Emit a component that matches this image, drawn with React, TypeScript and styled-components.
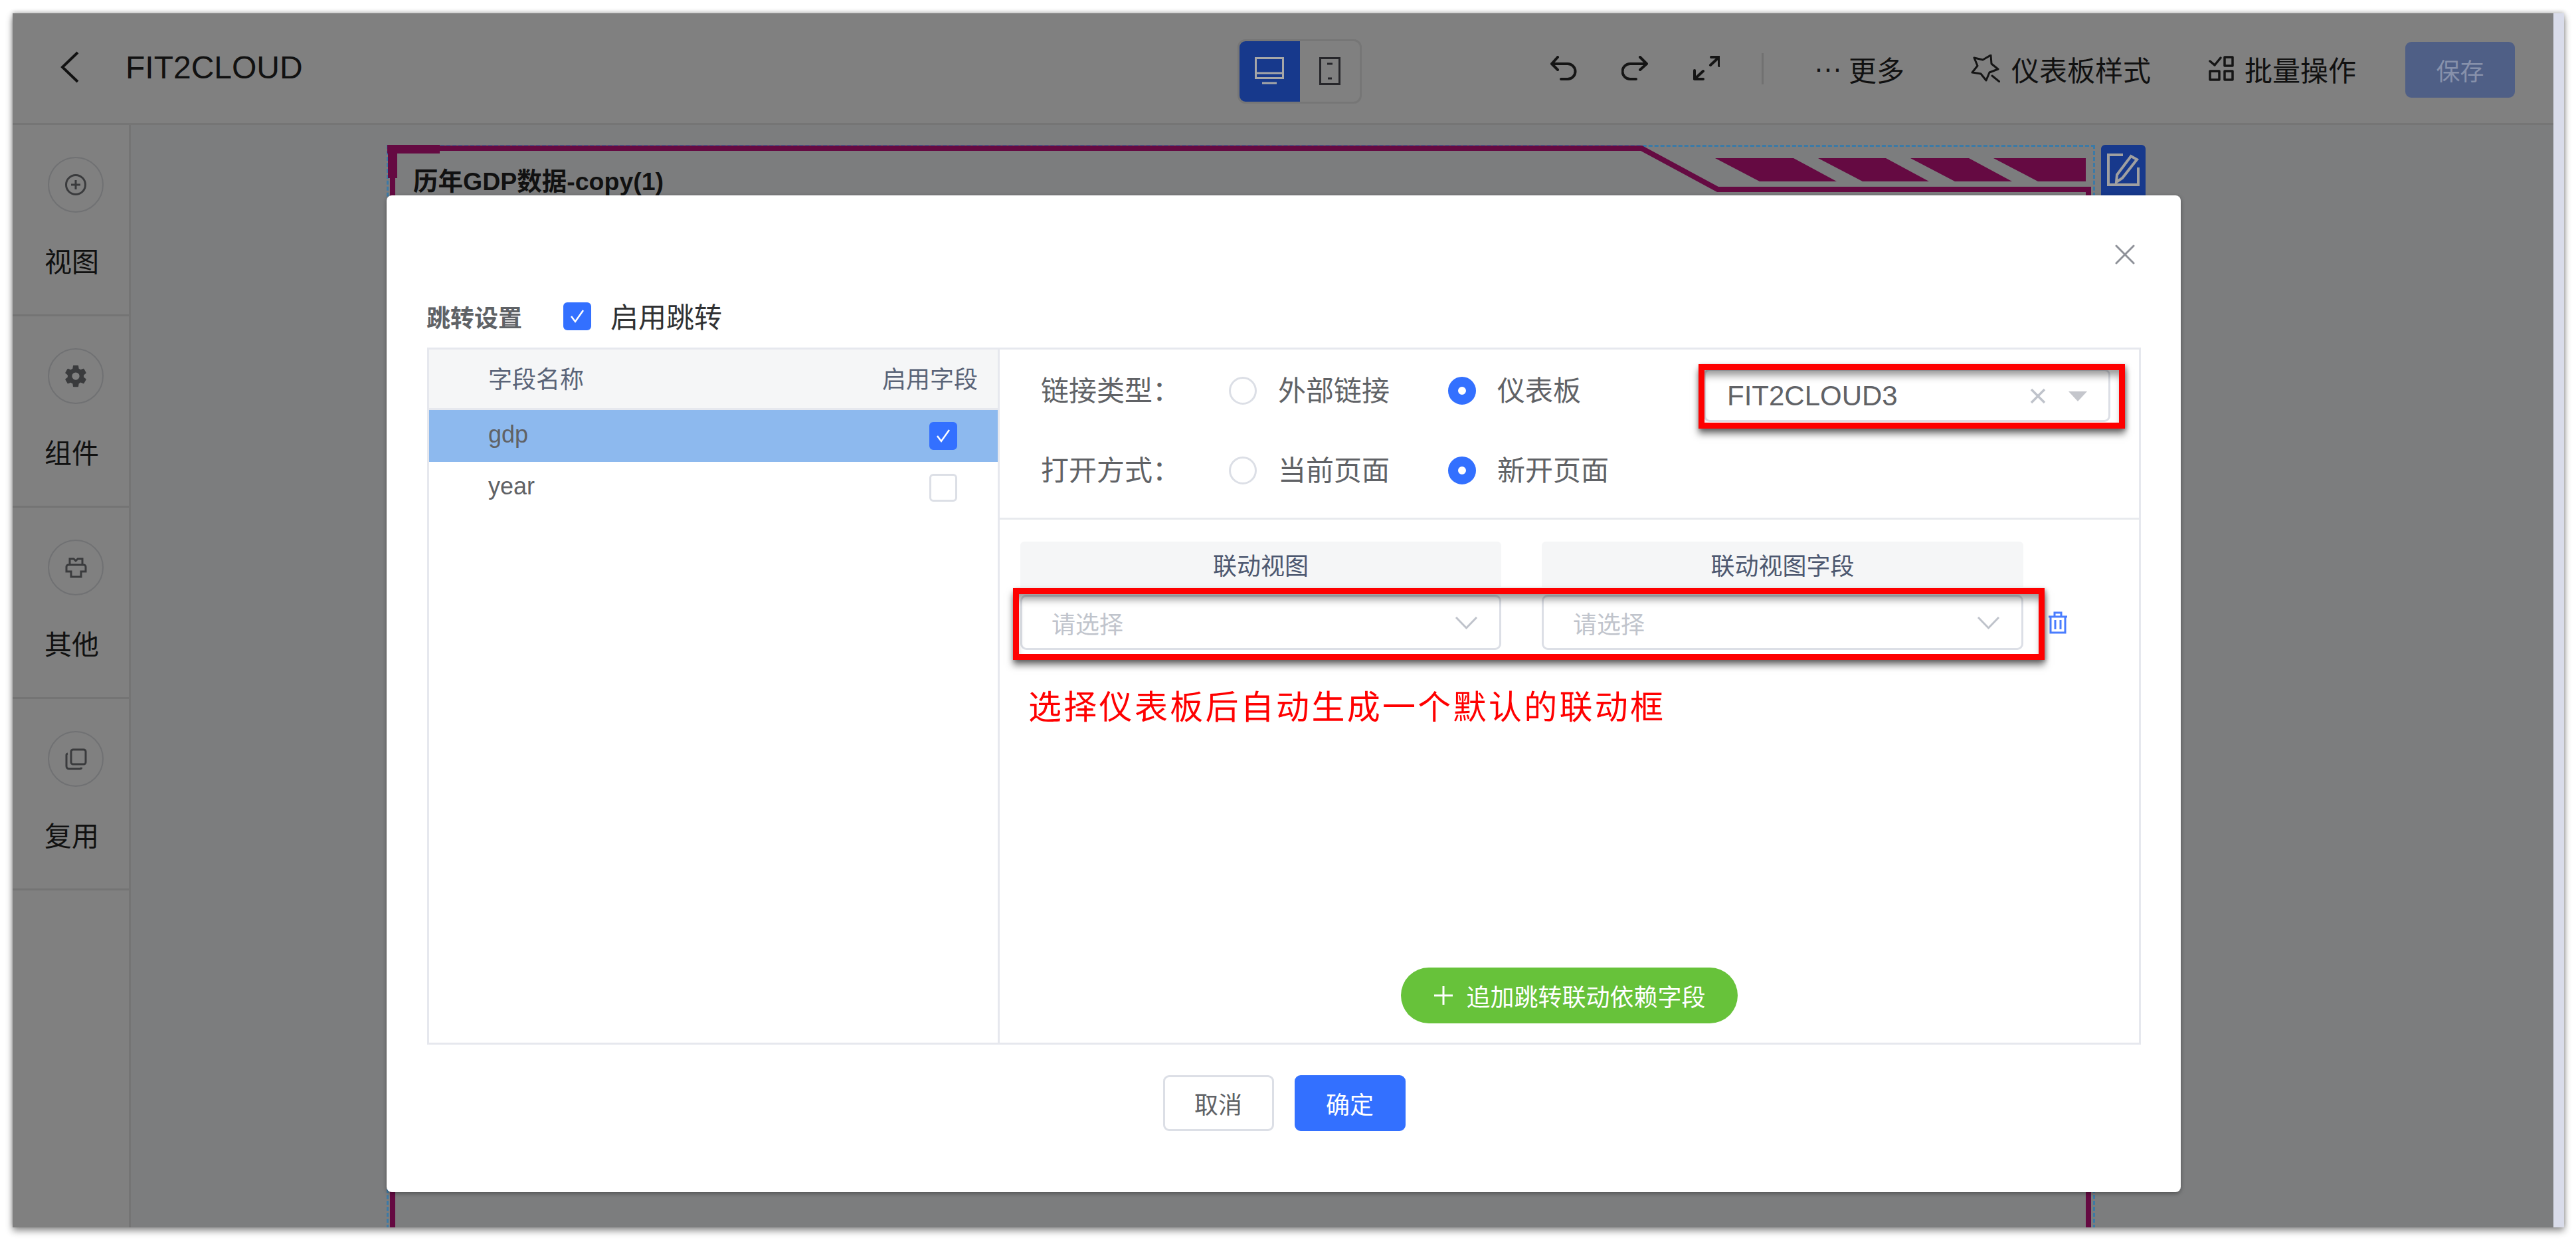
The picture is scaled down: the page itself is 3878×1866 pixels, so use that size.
import React from 'react';
import styled, { createGlobalStyle } from 'styled-components';
import { IoSettingsSharp } from 'react-icons/io5';

const FONT = '"Liberation Sans", "Noto Sans CJK SC", sans-serif';
const BLUE = '#3370ff';

const GlobalStyle = createGlobalStyle`
  html, body {
    margin: 0;
    padding: 0;
    background: #fff;
    font-family: ${FONT};
  }
  * {
    box-sizing: border-box;
  }
`;

const Page = styled.div`
  width: 3878px;
  height: 1866px;
  padding: 20px 18px 19px 19px;
  overflow: hidden;
`;

const Window = styled.div`
  display: flex;
  height: 1827px;
  box-shadow: 0 5px 10px rgba(0, 0, 0, 0.45), 0 -2px 6px rgba(0, 0, 0, 0.2);
`;

const Main = styled.div`
  position: relative;
  flex: 0 0 3825px;
  display: flex;
  flex-direction: column;
  overflow: hidden;
`;

const ScrollStrip = styled.div`
  flex: 0 0 16px;
  background: #d9dcea;
`;

/* top bar */
const Header = styled.header`
  flex: 0 0 168px;
  display: flex;
  align-items: center;
  background: #808080;
  border-bottom: 3px solid #757575;
  padding: 9px 58px 0 0;
`;

const HeaderLeft = styled.div`
  flex: 0 0 1844px;
  display: flex;
  align-items: center;
  margin-top: -12px;
  padding-left: 72px;
  gap: 70px;
`;

const Title = styled.div`
  font-size: 48px;
  color: #111;
`;

const DeviceSwitch = styled.div`
  display: flex;
  width: 187px;
  height: 97px;
  border: 3px solid #767676;
  border-radius: 12px;
  overflow: hidden;
`;

const DeviceBtn = styled.div<{ $active?: boolean }>`
  flex: 1;
  display: flex;
  align-items: center;
  justify-content: center;
  background: ${p => (p.$active ? '#17398c' : 'transparent')};
`;

const Tools = styled.div`
  margin: -8px 0 0 auto;
  display: flex;
  align-items: center;
  color: #111;
  font-size: 42px;
`;

const ToolIcon = styled.svg<{ $gap: number }>`
  display: block;
  margin-right: ${p => p.$gap}px;
  fill: none;
  stroke: #151515;
  stroke-width: 4;
  stroke-linecap: round;
  stroke-linejoin: round;
`;

const ToolDivider = styled.div`
  width: 3px;
  height: 47px;
  background: #717171;
  margin-right: 76px;
`;

const ToolText = styled.span<{ $gap: number }>`
  margin-right: ${p => p.$gap}px;
  white-space: nowrap;
`;

const SaveBtn = styled.div`
  width: 165px;
  height: 84px;
  margin-top: 4px;
  border-radius: 9px;
  background: #4f5f86;
  color: #8791ab;
  font-size: 36px;
  display: flex;
  align-items: center;
  justify-content: center;
`;

/* left rail + canvas */
const Workspace = styled.div`
  flex: 1;
  display: flex;
  min-height: 0;
`;

const Rail = styled.aside`
  flex: 0 0 178px;
  background: #808080;
  border-right: 3px solid #747474;
`;

const RailSection = styled.div`
  height: 288px;
  border-bottom: 3px solid #747474;
  padding: 48px 0 0 53px;
`;

const RailCircle = styled.div`
  width: 84px;
  height: 84px;
  border: 2px solid #707173;
  border-radius: 50%;
  display: flex;
  align-items: center;
  justify-content: center;
  color: #3a3b3d;
`;

const RailLabel = styled.div`
  margin: 50px 0 0 -5px;
  font-size: 41px;
  line-height: 50px;
  color: #111;
`;

const RailSvg = styled.svg`
  display: block;
  fill: none;
  stroke: currentColor;
  stroke-width: 3;
`;

const Canvas = styled.div`
  position: relative;
  flex: 1;
  background: #7c7d7e;
`;

const ChartItem = styled.div`
  position: absolute;
  left: 385px;
  top: 30px;
  width: 2572px;
  height: 1640px;
  border: 3px dashed #3c7aa6;
  border-bottom: 0;
  padding: 32px 37px;
`;

const ChartFrame = styled.svg`
  position: absolute;
  left: -3px;
  top: -3px;
`;

const ChartTitle = styled.div`
  position: relative;
  font-size: 37.5px;
  line-height: 40px;
  font-weight: 700;
  color: #111;
`;

const EditBtn = styled.div`
  position: absolute;
  left: 2578px;
  top: -3px;
  width: 67px;
  height: 100px;
  background: #17398c;
  border-radius: 6px 6px 0 0;
  padding: 12px 0 0 7px;
`;

/* dialog */
const Dialog = styled.div`
  position: absolute;
  left: 563px;
  top: 274px;
  width: 2701px;
  height: 1500px;
  background: #fff;
  border-radius: 8px;
  box-shadow: 0 2px 6px rgba(0, 0, 0, 0.35);
  padding: 161px 60px 0 61px;
  display: flex;
  flex-direction: column;
`;

const CloseIcon = styled.svg`
  position: absolute;
  left: 2602px;
  top: 74px;
  stroke: #8f9299;
  stroke-width: 3;
  stroke-linecap: round;
`;

const SettingBar = styled.div`
  display: flex;
  align-items: center;
  height: 42px;
  margin-bottom: 26px;
`;

const SettingTitle = styled.div`
  font-size: 36px;
  font-weight: 700;
  color: #5f6266;
  margin: 0 62px 0 -1px;
`;

const CheckLabel = styled.div`
  font-size: 42px;
  color: #303133;
  margin: -4px 0 0 29px;
`;

const Box = styled.div<{ $checked?: boolean }>`
  flex: 0 0 42px;
  width: 42px;
  height: 42px;
  border-radius: 6px;
  border: 3px solid ${p => (p.$checked ? BLUE : '#dcdfe6')};
  background: ${p => (p.$checked ? BLUE : '#fff')};
  display: flex;
  align-items: center;
  justify-content: center;
`;

const Panel = styled.div`
  flex: 0 0 1049px;
  display: flex;
  border: 3px solid #e6e8ee;
`;

const FieldList = styled.div`
  flex: 0 0 859px;
  border-right: 3px solid #e6e8ee;
`;

const FieldHead = styled.div`
  height: 91px;
  display: flex;
  align-items: center;
  justify-content: space-between;
  padding: 0 30px 4px 89px;
  background: #f5f6f7;
  border-bottom: 3px solid #e6e8ee;
  font-size: 36px;
  color: #5a6478;
`;

const FieldRow = styled.div<{ $selected?: boolean }>`
  height: 78px;
  display: flex;
  align-items: center;
  justify-content: space-between;
  padding: 0 61px 0 89px;
  background: ${p => (p.$selected ? '#8db9ee' : '#fff')};
  font-size: 36px;
  color: #606266;
`;

const FieldName = styled.span`
  margin-top: -4px;
`;

const Config = styled.div`
  flex: 1;
  display: flex;
  flex-direction: column;
`;

const ConfigTop = styled.div`
  height: 256px;
  padding: 2px 0 0 62px;
  border-bottom: 3px solid #e8eaee;
`;

const ConfigRow = styled.div`
  position: relative;
  height: 120px;
  display: flex;
  align-items: center;
  font-size: 42px;
  color: #606266;
`;

const ConfigLabel = styled.div`
  width: 283px;
  margin-top: -8px;
  white-space: nowrap;
`;

const RadioDot = styled.div<{ $checked?: boolean }>`
  width: 42px;
  height: 42px;
  border-radius: 50%;
  margin-right: 32px;
  border: ${p => (p.$checked ? `15px solid ${BLUE}` : '3px solid #dcdfe6')};
  background: #fff;
`;

const RadioText = styled.div<{ $width: number }>`
  width: ${p => p.$width}px;
  margin-top: -8px;
  white-space: nowrap;
`;

const Select = styled.div`
  position: relative;
  margin: 14px 43px 0 auto;
  width: 612px;
  height: 80px;
  border: 3px solid #dcdfe6;
  border-radius: 9px;
  background: #fff;
  padding: 2px 32px 0 32px;
  display: flex;
  align-items: center;
  justify-content: space-between;
`;

const SelectValue = styled.span`
  font-size: 42px;
  color: #606266;
`;

const SelectIcons = styled.div`
  display: flex;
  align-items: center;
  gap: 34px;
`;

const Caret = styled.div`
  width: 0;
  height: 0;
  border-left: 14px solid transparent;
  border-right: 14px solid transparent;
  border-top: 15px solid #c4c6cc;
`;

/* hand drawn annotations sitting on top of the form */
const Annotation = styled.div<{ $t: number; $r: number; $b: number; $l: number }>`
  position: absolute;
  top: ${p => p.$t}px;
  right: ${p => p.$r}px;
  bottom: ${p => p.$b}px;
  left: ${p => p.$l}px;
  border: 9px solid #fe0000;
  pointer-events: none;
  box-shadow: 0 8px 10px rgba(0, 0, 0, 0.5), 2px 2px 6px rgba(0, 0, 0, 0.3),
    inset 0 12px 12px -4px rgba(0, 0, 0, 0.4);
`;

const Mapping = styled.div`
  flex: 1;
  display: flex;
  flex-direction: column;
  padding: 33px 0 29px 31px;
`;

const MapGrid = styled.div`
  position: relative;
  display: grid;
  grid-template-columns: 724px 725px;
  column-gap: 61px;
`;

const MapHead = styled.div`
  height: 68px;
  margin-bottom: 12px;
  border-radius: 6px 6px 0 0;
  background: #f5f6f7;
  font-size: 36px;
  color: #4d5870;
  display: flex;
  align-items: center;
  justify-content: center;
`;

const MapRow = styled.div`
  display: flex;
  align-items: center;
`;

const MapInput = styled.div`
  height: 83px;
  border: 3px solid #dcdfe6;
  border-radius: 9px;
  background: #fff;
  padding: 0 32px 0 44px;
  display: flex;
  align-items: center;
  justify-content: space-between;
  font-size: 36px;
  color: #c0c4cc;
`;

const TrashSvg = styled.svg`
  margin-left: 37px;
  fill: none;
  stroke: #4a7dff;
  stroke-width: 3;
`;

const Note = styled.div`
  margin: 57px 0 0 12px;
  font-size: 50px;
  line-height: 60px;
  letter-spacing: 3.3px;
  color: #f00;
`;

const AddBtn = styled.div`
  margin: auto 0 0 -31px;
  align-self: center;
  width: 507px;
  height: 84px;
  border-radius: 42px;
  background: #67c23a;
  color: #fff;
  font-size: 36px;
  display: flex;
  align-items: center;
  justify-content: center;
  gap: 18px;
`;

const Footer = styled.div`
  margin-top: 46px;
  display: flex;
  justify-content: center;
  gap: 31px;
`;

const FooterBtn = styled.div<{ $primary?: boolean }>`
  width: 167px;
  height: 84px;
  border-radius: 9px;
  border: 3px solid ${p => (p.$primary ? BLUE : '#dcdfe6')};
  background: ${p => (p.$primary ? BLUE : '#fff')};
  color: ${p => (p.$primary ? '#fff' : '#606266')};
  font-size: 36px;
  display: flex;
  align-items: center;
  justify-content: center;
`;

const Check = () => (
  <svg width="24" height="22" viewBox="0 0 24 22" fill="none" stroke="#fff" strokeWidth="2.5">
    <path d="M3 11l6 8L21 2" />
  </svg>
);

const Chevron = () => (
  <svg width="35" height="20" viewBox="0 0 35 20" fill="none" stroke="#bfc3cb" strokeWidth="3">
    <path d="M2 2l15.5 16L33 2" />
  </svg>
);

const railItems = [
  {
    label: '视图',
    icon: (
      <RailSvg width="32" height="32" viewBox="0 0 32 32">
        <circle cx="16" cy="16" r="14.5" />
        <path d="M16 9v14M9 16h14" />
      </RailSvg>
    ),
  },
  { label: '组件', icon: <IoSettingsSharp size={36} /> },
  {
    label: '其他',
    icon: (
      <RailSvg width="33" height="31" viewBox="0 0 33 31">
        <path d="M7 11V2h6l3 3 3-3h7v9" />
        <path d="M5 11h23a3 3 0 0 1 3 3v7h-7v8H9v-8H2v-7a3 3 0 0 1 3-3z" />
      </RailSvg>
    ),
  },
  {
    label: '复用',
    icon: (
      <RailSvg width="33" height="33" viewBox="0 0 33 33">
        <rect x="9" y="2" width="22" height="22" rx="3" />
        <path d="M4 8a2.500 2.500 0 0 0-2 3v16a4 4 0 0 0 4 4h16a3 3 0 0 0 3-2" />
      </RailSvg>
    ),
  },
];

export default function App() {
  return (
    <Page>
      <GlobalStyle />
      <Window>
        <Main>
          <Header>
            <HeaderLeft>
              <svg width="28" height="48" viewBox="0 0 28 48" fill="none" stroke="#111" strokeWidth="4">
                <path d="M26 2L3 24l23 22" />
              </svg>
              <Title>FIT2CLOUD</Title>
            </HeaderLeft>
            <DeviceSwitch>
              <DeviceBtn $active>
                <svg width="44" height="42" viewBox="0 0 44 42" fill="none" stroke="#a7a7a7" strokeWidth="3">
                  <rect x="1.500" y="1.500" width="41" height="30" />
                  <path d="M2 24h40M11 39h22" />
                </svg>
              </DeviceBtn>
              <DeviceBtn>
                <svg width="32" height="42" viewBox="0 0 32 42" fill="none" stroke="#26262a" strokeWidth="3">
                  <rect x="1.500" y="1.500" width="29" height="39" />
                  <path d="M12 10h8M13 32h6" />
                </svg>
              </DeviceBtn>
            </DeviceSwitch>
            <Tools>
              <ToolIcon $gap={67} width="40" height="38" viewBox="0 0 40 38">
                <path d="M11 2L2 12l9 9M2 12h24a11 11 0 0 1 0 23H16" />
              </ToolIcon>
              <ToolIcon $gap={68} width="40" height="38" viewBox="0 0 40 38">
                <path d="M28 2l10 10-10 9M38 12H13a11.500 11.500 0 0 0 0 23h9" />
              </ToolIcon>
              <ToolIcon $gap={63} width="40" height="38" viewBox="0 0 40 38">
                <path d="M2 22v13h13M2 35l13-12M27 2h12v13M39 2L26 14" />
              </ToolIcon>
              <ToolDivider />
              <ToolText $gap={10}>···</ToolText>
              <ToolText $gap={100}>更多</ToolText>
              <ToolIcon $gap={17} width="44" height="42" viewBox="0 0 44 42">
                <path d="M5 5l13 3L30 1l1 13 10 8-13 5-5 12-8-10-13-2 8-10z" strokeWidth="3" />
                <path d="M32 32l11 9" strokeWidth="3" />
              </ToolIcon>
              <ToolText $gap={87}>仪表板样式</ToolText>
              <ToolIcon $gap={16} width="38" height="38" viewBox="0 0 38 38">
                <path d="M2 8l7 6 9-11" strokeWidth="3.500" />
                <rect x="24" y="2" width="12" height="13" strokeWidth="3.500" />
                <rect x="2" y="23" width="14" height="13" strokeWidth="3.500" />
                <rect x="24" y="23" width="12" height="13" strokeWidth="3.500" />
              </ToolIcon>
              <ToolText $gap={74}>批量操作</ToolText>
              <SaveBtn>保存</SaveBtn>
            </Tools>
          </Header>

          <Workspace>
            <Rail>
              {railItems.map(item => (
                <RailSection key={item.label}>
                  <RailCircle>{item.icon}</RailCircle>
                  <RailLabel>{item.label}</RailLabel>
                </RailSection>
              ))}
            </Rail>
            <Canvas>
              <ChartItem>
                <ChartFrame width="2572" height="1640" viewBox="0 0 2572 1640" fill="none" stroke="#650a42">
                  <path d="M9 1640V5H1889L2004 67H2562V1640" strokeWidth="8" />
                  <path d="M1 6H80M9 1V50" strokeWidth="14" />
                  <path
                    fill="#650a42"
                    stroke="none"
                    d="M2000 20H2118L2183 55H2067ZM2155 20H2257L2322 55H2222ZM2294 20H2382L2447 55H2361ZM2419 20H2558V55H2486Z"
                  />
                </ChartFrame>
                <ChartTitle>历年GDP数据-copy(1)</ChartTitle>
                <EditBtn>
                  <svg width="52" height="62" viewBox="0 0 52 62" fill="none" stroke="#a0a0a0" strokeWidth="4">
                    <path d="M26 3H4v45h45V22" />
                    <path d="M38 5l9 5-22 28-9 6 1-11z" />
                  </svg>
                </EditBtn>
              </ChartItem>
            </Canvas>
          </Workspace>

          <Dialog>
            <CloseIcon width="30" height="30" viewBox="0 0 30 30">
              <path d="M2 2l26 26M28 2L2 28" />
            </CloseIcon>
            <SettingBar>
              <SettingTitle>跳转设置</SettingTitle>
              <Box $checked>
                <Check />
              </Box>
              <CheckLabel>启用跳转</CheckLabel>
            </SettingBar>

            <Panel>
              <FieldList>
                <FieldHead>
                  <span>字段名称</span>
                  <span>启用字段</span>
                </FieldHead>
                <FieldRow $selected>
                  <FieldName>gdp</FieldName>
                  <Box $checked>
                    <Check />
                  </Box>
                </FieldRow>
                <FieldRow>
                  <FieldName>year</FieldName>
                  <Box />
                </FieldRow>
              </FieldList>

              <Config>
                <ConfigTop>
                  <ConfigRow>
                    <ConfigLabel>链接类型：</ConfigLabel>
                    <RadioDot />
                    <RadioText $width={256}>外部链接</RadioText>
                    <RadioDot $checked />
                    <RadioText $width={125}>仪表板</RadioText>
                    <Select>
                      <SelectValue>FIT2CLOUD3</SelectValue>
                      <SelectIcons>
                        <svg width="24" height="24" viewBox="0 0 24 24" stroke="#bfc3cb" strokeWidth="3.500">
                          <path d="M2 2l20 20M22 2L2 22" />
                        </svg>
                        <Caret />
                      </SelectIcons>
                      <Annotation $t={-10} $r={-25} $b={-13} $l={-11} />
                    </Select>
                  </ConfigRow>
                  <ConfigRow>
                    <ConfigLabel>打开方式：</ConfigLabel>
                    <RadioDot />
                    <RadioText $width={256}>当前页面</RadioText>
                    <RadioDot $checked />
                    <RadioText $width={170}>新开页面</RadioText>
                  </ConfigRow>
                </ConfigTop>

                <Mapping>
                  <MapGrid>
                    <MapHead>联动视图</MapHead>
                    <MapHead>联动视图字段</MapHead>
                  </MapGrid>
                  <MapRow>
                    <MapGrid>
                      <MapInput>
                        <span>请选择</span>
                        <Chevron />
                      </MapInput>
                      <MapInput>
                        <span>请选择</span>
                        <Chevron />
                      </MapInput>
                      <Annotation $t={-10} $r={-32} $b={-15} $l={-11} />
                    </MapGrid>
                    <TrashSvg width="30" height="34" viewBox="0 0 30 34">
                      <path d="M1 8h28M10 8V2h10v6M4 8v24h22V8M11 13v14M19 13v14" />
                    </TrashSvg>
                  </MapRow>
                  <Note>选择仪表板后自动生成一个默认的联动框</Note>
                  <AddBtn>
                    <svg width="32" height="32" viewBox="0 0 32 32" stroke="#fff" strokeWidth="3">
                      <path d="M16 2v28M2 16h28" />
                    </svg>
                    <span>追加跳转联动依赖字段</span>
                  </AddBtn>
                </Mapping>
              </Config>
            </Panel>

            <Footer>
              <FooterBtn>取消</FooterBtn>
              <FooterBtn $primary>确定</FooterBtn>
            </Footer>
          </Dialog>
        </Main>
        <ScrollStrip />
      </Window>
    </Page>
  );
}
